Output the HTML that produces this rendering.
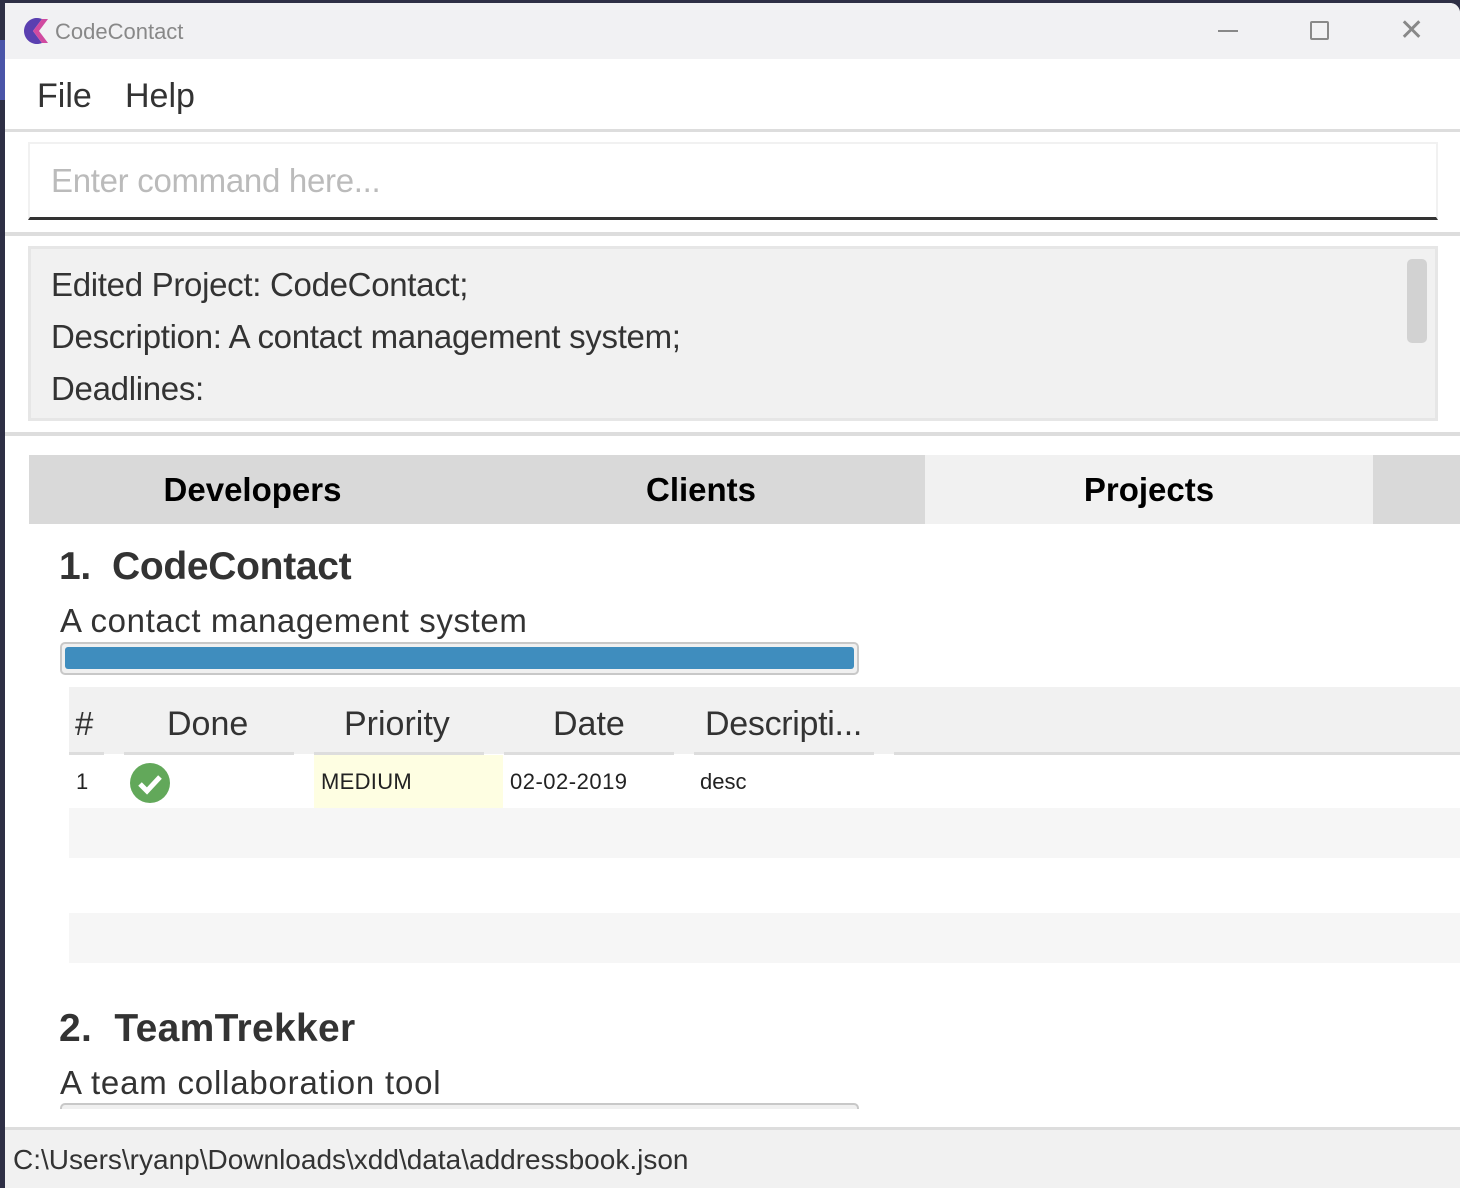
<!DOCTYPE html>
<html><head><meta charset="utf-8"><style>
*{margin:0;padding:0;box-sizing:border-box}
body{width:1460px;height:1188px;background:#2e2f45;font-family:"Liberation Sans",sans-serif;position:relative;overflow:hidden;color:#333}
.a{position:absolute}
.win{left:5px;top:3px;width:1455px;height:1185px;background:#fff;border-top-right-radius:10px;overflow:hidden}
.t{white-space:nowrap;position:absolute}
</style></head><body>
<div class="a" style="left:0;top:40px;width:5px;height:60px;background:#4a55a8"></div>
<div class="a win">
 <div class="a" style="left:0;top:0;width:1455px;height:56px;background:#f1f1f3"></div>
 <svg class="a" style="left:15px;top:13px" width="30" height="30" viewBox="0 0 30 30"><path d="M22 3 A13 13 0 1 0 22 27 L13 15 Z" fill="#5a3fb0"/><path d="M22 3 L28 3 L19 15 L28 27 L22 27 L13 15Z" fill="#d04aa0"/></svg>
 <div class="t" style="left:50px;top:16px;font-size:22px;color:#888">CodeContact</div>
 <div class="a" style="left:1213px;top:27px;width:20px;height:2px;background:#888"></div>
 <div class="a" style="left:1305px;top:18px;width:19px;height:19px;border:2px solid #888;border-radius:2px"></div>
 <div class="t" style="left:1394px;top:10px;font-size:30px;color:#888;font-weight:200">✕</div>
 <div class="t" style="left:32px;top:74px;font-size:34px;color:#333;font-weight:300">File</div>
 <div class="t" style="left:120px;top:74px;font-size:34px;color:#333">Help</div>
 <div class="a" style="left:0;top:126px;width:1455px;height:3px;background:#ddd"></div>
 <div class="a" style="left:23px;top:139px;width:1410px;height:78px;border:2px solid #f1f1f1;border-bottom:3px solid #333;background:#fff"></div>
 <div class="t" style="left:46px;top:159px;font-size:33px;color:#bbb;letter-spacing:-0.3px">Enter command here...</div>
 <div class="a" style="left:0;top:229px;width:1455px;height:4px;background:#ddd"></div>
 <div class="a" style="left:23px;top:243px;width:1410px;height:175px;border:3px solid #e6e6e6;background:#f1f1f1"></div>
 <div class="a" style="left:1402px;top:256px;width:20px;height:84px;background:#d2d2d2;border-radius:5px"></div>
 <div class="t" style="left:46px;top:256px;font-size:33px;color:#333;line-height:52px;letter-spacing:-0.3px">Edited Project: CodeContact;<br>Description: A contact management system;<br>Deadlines:</div>
 <div class="a" style="left:0;top:429px;width:1455px;height:4px;background:#ddd"></div>
 <div class="a" style="left:24px;top:452px;width:1431px;height:69px;background:#d9d9d9"></div>
 <div class="a" style="left:920px;top:452px;width:448px;height:69px;background:#f1f1f1"></div>
 <div class="t" style="left:24px;top:468px;width:447px;text-align:center;font-size:33px;font-weight:bold;color:#000">Developers</div>
 <div class="t" style="left:472px;top:468px;width:448px;text-align:center;font-size:33px;font-weight:bold;color:#000">Clients</div>
 <div class="t" style="left:920px;top:468px;width:448px;text-align:center;font-size:33px;font-weight:bold;color:#000">Projects</div>
 <div class="t" style="left:54px;top:542px;font-size:39px;font-weight:bold;color:#333;letter-spacing:-0.3px">1.&nbsp; CodeContact</div>
 <div class="t" style="left:55px;top:599px;font-size:33px;color:#333;letter-spacing:0.6px">A contact management system</div>
 <div class="a" style="left:55px;top:639px;width:799px;height:33px;border:2px solid #c8c8c8;border-radius:5px;background:#f0f0f0"></div>
 <div class="a" style="left:60px;top:644px;width:789px;height:22px;background:#3f8dbe;border-radius:3px"></div>
 <div class="a" style="left:64px;top:684px;width:1391px;height:67px;background:#f1f1f1"></div>
 <div class="a" style="left:64px;top:749px;width:35px;height:3px;background:#ddd"></div>
 <div class="a" style="left:119px;top:749px;width:170px;height:3px;background:#ddd"></div>
 <div class="a" style="left:309px;top:749px;width:170px;height:3px;background:#ddd"></div>
 <div class="a" style="left:499px;top:749px;width:170px;height:3px;background:#ddd"></div>
 <div class="a" style="left:689px;top:749px;width:180px;height:3px;background:#ddd"></div>
 <div class="a" style="left:889px;top:749px;width:566px;height:3px;background:#ddd"></div>
 <div class="t" style="left:70px;top:702px;font-size:33px;color:#333">#</div>
 <div class="t" style="left:162px;top:702px;font-size:34px;color:#333;font-weight:300">Done</div>
 <div class="t" style="left:339px;top:702px;font-size:34px;color:#333">Priority</div>
 <div class="t" style="left:548px;top:702px;font-size:34px;color:#333">Date</div>
 <div class="t" style="left:700px;top:702px;font-size:34px;color:#333;letter-spacing:-0.3px">Descripti...</div>
 <div class="a" style="left:64px;top:752px;width:1391px;height:53px;background:#fff"></div>
 <div class="a" style="left:309px;top:752px;width:189px;height:53px;background:#fefee2"></div>
 <div class="t" style="left:71px;top:766px;font-size:22px;color:#222">1</div>
 <svg class="a" style="left:125px;top:760px" width="40" height="40" viewBox="0 0 40 40"><circle cx="20" cy="20" r="20" fill="#62a85a"/><path d="M10 21 L17 28 L30 14" stroke="#fff" stroke-width="5" fill="none"/></svg>
 <div class="t" style="left:316px;top:766px;font-size:22px;color:#222;letter-spacing:0.3px">MEDIUM</div>
 <div class="t" style="left:505px;top:766px;font-size:22px;color:#222;letter-spacing:0.5px">02-02-2019</div>
 <div class="t" style="left:695px;top:766px;font-size:22px;color:#222">desc</div>
 <div class="a" style="left:64px;top:805px;width:1391px;height:50px;background:#f6f6f6"></div>
 <div class="a" style="left:64px;top:910px;width:1391px;height:50px;background:#f6f6f6"></div>
 <div class="t" style="left:54px;top:1004px;font-size:39px;font-weight:bold;color:#333;letter-spacing:0.3px">2.&nbsp; TeamTrekker</div>
 <div class="t" style="left:55px;top:1061px;font-size:33px;color:#333;letter-spacing:0.8px">A team collaboration tool</div>
 <div class="a" style="left:55px;top:1100px;width:799px;height:6px;border:2px solid #c8c8c8;border-bottom:none;border-radius:5px 5px 0 0;background:#f0f0f0"></div>
 <div class="a" style="left:0;top:1124px;width:1455px;height:61px;background:#f1f1f1;border-top:3px solid #ddd"></div>
 <div class="t" style="left:8px;top:1141px;font-size:28px;color:#333;letter-spacing:0px">C:\Users\ryanp\Downloads\xdd\data\addressbook.json</div>
</div>
</body></html>
